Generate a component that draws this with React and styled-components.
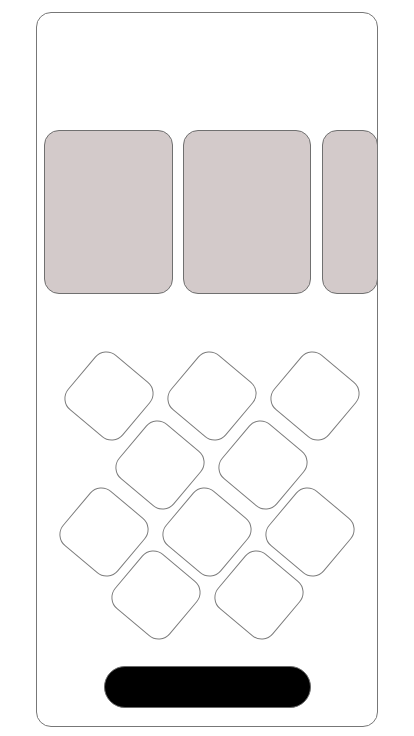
import styled, { createGlobalStyle } from "styled-components"

const GlobalStyle = createGlobalStyle`
  body {
    margin: 0;
    background: #ffffff;
    font-family: "Liberation Sans", Arial, sans-serif;
  }
`

const cards = [129, 128, 56]

const rows = [
  { count: 3, shift: 9, overlap: 0 },
  { count: 2, shift: 8, overlap: 3 },
  { count: 3, shift: 0, overlap: 5 },
  { count: 2, shift: 1, overlap: 9 },
]

export default function App() {
  return (
    <Page>
      <GlobalStyle />
      <Phone>
        <Carousel>
          {cards.map((w, i) => (
            <Card key={i} $w={w} />
          ))}
        </Carousel>
        <Keypad>
          {rows.map((row, i) => (
            <KeyRow key={i} $shift={row.shift} $overlap={row.overlap}>
              {Array.from({ length: row.count }).map((_, j) => (
                <Key key={j} />
              ))}
            </KeyRow>
          ))}
        </Keypad>
        <HomeBar />
      </Phone>
    </Page>
  )
}

const Page = styled.div`
  display: flex;
  justify-content: center;
  padding-top: 12px;
`

const Phone = styled.div`
  box-sizing: border-box;
  width: 342px;
  height: 715px;
  border: 1px solid #777777;
  border-radius: 15px;
  overflow: hidden;
  display: flex;
  flex-direction: column;
  align-items: center;
`

const Carousel = styled.div`
  align-self: stretch;
  display: flex;
  gap: 10px;
  padding: 117px 0 0 7px;
`

const Card = styled.div`
  flex: 0 0 auto;
  box-sizing: border-box;
  width: ${p => p.$w}px;
  height: 164px;
  background: #d3caca;
  border: 1px solid #707070;
  border-radius: 15px;
  &:last-child {
    margin-left: 1px;
  }
`

const Keypad = styled.div`
  display: flex;
  flex-direction: column;
  margin-top: 66px;
`

const KeyRow = styled.div`
  display: flex;
  justify-content: center;
  gap: 31px;
  margin-top: ${p => -p.$overlap}px;
  padding-left: ${p => p.$shift}px;
`

const Key = styled.div`
  box-sizing: border-box;
  width: 72px;
  height: 72px;
  background: #ffffff;
  border: 1px solid #7d7d7d;
  border-radius: 15px;
  transform: rotate(40deg);
`

const HomeBar = styled.div`
  box-sizing: border-box;
  width: 207px;
  height: 42px;
  margin-top: auto;
  margin-bottom: 18px;
  background: #000000;
  border: 1px solid #6a6a6a;
  border-radius: 21px;
`
